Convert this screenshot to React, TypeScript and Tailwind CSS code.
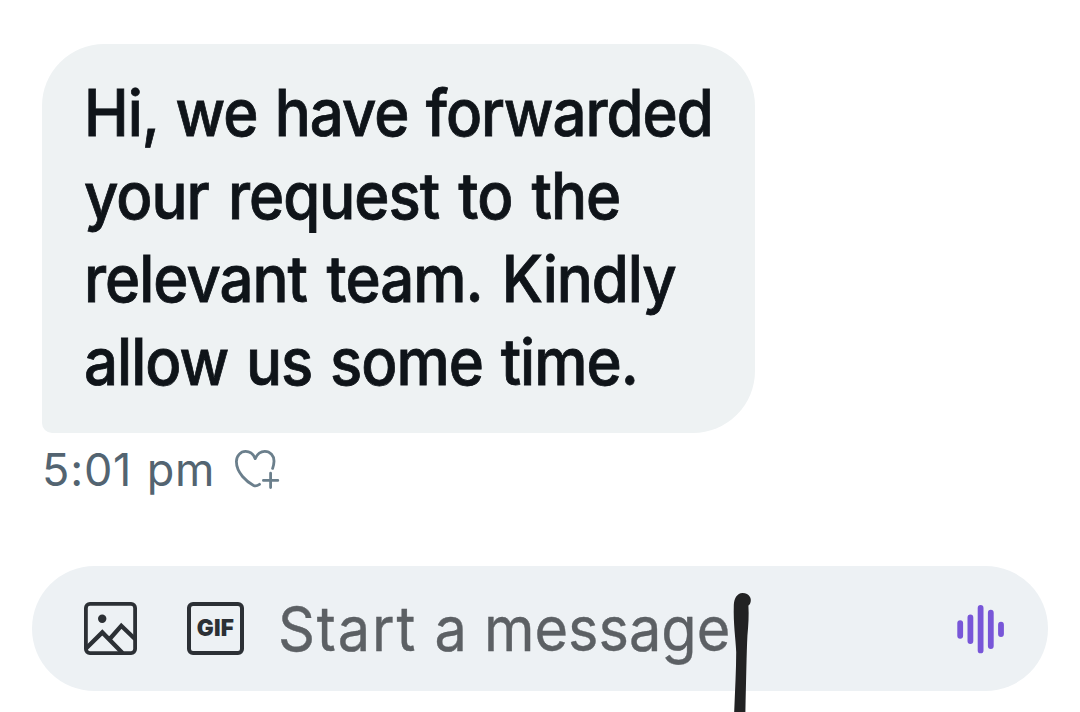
import clsx from 'clsx';

interface Line {
  text: string;
  className: string;
}

const lines: Line[] = [
  { text: 'Hi, we have forwarded', className: '[word-spacing:2.5px]' },
  { text: 'your request to the', className: '[word-spacing:4.5px]' },
  { text: 'relevant team. Kindly', className: '[word-spacing:5px]' },
  { text: 'allow us some time.', className: '[word-spacing:3px]' },
];

function HeartPlusIcon() {
  return (
    <svg
      width="46"
      height="42"
      viewBox="0 0 46 42"
      fill="none"
      stroke="#6b7f8c"
      strokeWidth="2.8"
      strokeLinecap="round"
      strokeLinejoin="round"
      aria-hidden="true"
    >
      <path d="M24.5 35.3C22.6 36.6 20.6 37.4 18.6 36.4C12 33 1.4 24 1.4 12.6C1.4 6.8 5.6 2.4 10.6 2.4C15 2.4 18.4 5.2 20.2 9.6C22.2 5.2 25.6 2.4 29.8 2.4C35.2 2.4 39.2 6.8 39 12.4C38.9 15 38.4 17.4 37.6 19.4" />
      <path d="M35.6 24.2V38.6M28.4 31.4H42.8" />
    </svg>
  );
}

function PhotoIcon() {
  return (
    <svg width="53" height="53" viewBox="0 0 53 53" fill="none" stroke="#2c3035" strokeWidth="3.8" aria-hidden="true">
      <rect x="1.9" y="1.9" width="49.2" height="49.2" rx="4" />
      <path strokeWidth="4.3" d="M2 46.5L18.3 30.4L38.5 51M26.6 36L37.3 23.8L51 37" />
      <circle cx="18.2" cy="16.8" r="4.2" fill="#2c3035" stroke="none" />
    </svg>
  );
}

function GifIcon() {
  return (
    <div className="flex h-[53px] w-[57px] items-center justify-center rounded-md border-4 border-[#2c3035] text-[22.5px] leading-none font-black text-[#2c3035]">
      <span className="tracking-[0.3px]">GIF</span>
    </div>
  );
}

function VoiceIcon() {
  return (
    <svg width="48" height="52" viewBox="0 0 48 52" stroke="#7856d8" strokeWidth="5.8" strokeLinecap="round" aria-hidden="true">
      <path d="M3.2 20.1V32.8M13.4 14.4V38.1M23.6 5V47.4M33.8 9.7V43.1M44 21.7V31.1" />
    </svg>
  );
}

/** Hand-drawn marker line that crosses the composer. */
function MarkerStroke() {
  return (
    <svg className="absolute top-[590px] left-[730px]" width="26" height="122" viewBox="0 0 26 122" fill="#222223" aria-hidden="true">
      <path d="M12.5 3C16 3 18.5 4.6 20 7C21.8 10.4 20.4 14.2 18.4 15.6C19 26 18.4 35 17.4 46C16.6 62 16.2 90 15.4 122H4.2C5 100 6.2 80 6.2 62C5.6 48 3.2 34 3.8 15C4.2 8 7 3.4 12.5 3Z" />
    </svg>
  );
}

export default function App() {
  return (
    <main className="relative flex h-[712px] w-[1080px] flex-col overflow-hidden bg-white pt-11 font-['Inter',sans-serif]">
      <div className="ml-[42px] h-[389px] w-[713px] rounded-[62px] rounded-bl-[10px] bg-[#eef2f3] pt-7 pl-[42px] text-[64.5px] leading-[83px] font-medium text-[#0f1419] [-webkit-text-stroke:0.8px_#0f1419]">
        {lines.map((line) => (
          <p key={line.text} className={clsx('origin-left scale-x-93 tracking-[-1.1px] whitespace-nowrap', line.className)}>
            {line.text}
          </p>
        ))}
      </div>

      <div className="mt-[9px] ml-[42px] flex h-[56px] items-center gap-5">
        <time className="text-[45px] leading-[56px] tracking-[0.8px] whitespace-nowrap text-[#536471] [word-spacing:1px]">5:01 pm</time>
        <HeartPlusIcon />
      </div>

      <div className="mt-[68px] ml-8 flex h-[125px] w-[1016px] items-center rounded-full bg-[#edf1f4] pl-[52px]">
        <PhotoIcon />
        <div className="ml-[50px]">
          <GifIcon />
        </div>
        <span className="ml-[34px] w-[460px] origin-left scale-x-93 text-[62px] leading-[76px] whitespace-nowrap text-[#5c6064] [-webkit-text-stroke:0.4px_#5c6064] [word-spacing:1px]">
          <span className="tracking-[2px]">Start</span> a message
        </span>
        <div className="mr-[43px] ml-auto">
          <VoiceIcon />
        </div>
      </div>

      <MarkerStroke />
    </main>
  );
}
